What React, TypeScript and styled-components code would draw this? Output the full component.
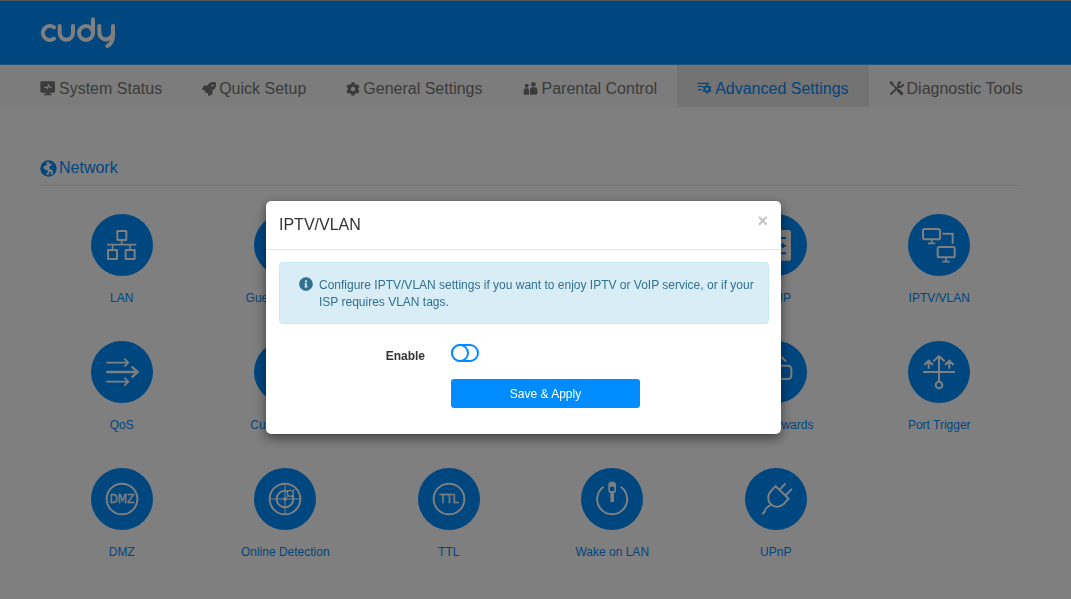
import React, { useState } from "react";
import styled, { createGlobalStyle, css } from "styled-components";
import { FaRocket, FaCog, FaInfoCircle } from "react-icons/fa";

const BLUE = "#008cff";

const GlobalStyle = createGlobalStyle`
  *, *::before, *::after { box-sizing: border-box; }
  html, body { margin: 0; background: #fff; }
  body { font-family: "Liberation Sans", Arial, sans-serif; font-size: 12px; color: #333; }
`;

const Page = styled.div`
  min-height: 100vh;
`;

const Header = styled.header`
  display: flex;
  align-items: center;
  height: 65px;
  padding: 0 40px;
  background: ${BLUE};
  border-top: 1px solid #aaa;
  border-bottom: 1px solid #3ca5fa;
`;

const LogoLink = styled.a`
  display: block;
  height: 32px;
`;

const Nav = styled.nav`
  display: flex;
  height: 43px;
  padding: 0 20px;
  background: #f8f8f8;
  border-bottom: 1px solid #fbfbfb;
`;

const Tab = styled.a<{ $active?: boolean }>`
  display: flex;
  align-items: center;
  gap: 3px;
  padding: 5px 20px 0;
  font-size: 16px;
  white-space: nowrap;
  text-decoration: none;
  color: #777;
  svg { flex: none; }
  ${(p) =>
    p.$active &&
    css`
      color: ${BLUE};
      background: #e7e7e7;
    `}
`;

const Main = styled.main`
  padding: 49px 50px 40px 40px;
`;

const SectionTitle = styled.h2`
  display: flex;
  align-items: center;
  gap: 2px;
  margin: 0 0 28px;
  padding-bottom: 6px;
  border-bottom: 1px solid #eee;
  font-size: 16px;
  line-height: 22px;
  font-weight: 400;
  color: ${BLUE};
`;

const Grid = styled.div`
  display: grid;
  grid-template-columns: repeat(6, 1fr);
  row-gap: 35px;
`;

const Card = styled.a<{ $column: number }>`
  grid-column: ${(p) => p.$column};
  display: flex;
  flex-direction: column;
  align-items: center;
  gap: 14px;
  font-size: 12px;
  line-height: 16px;
  text-decoration: none;
  white-space: nowrap;
  color: ${BLUE};
`;

const Disc = styled.span`
  display: block;
  width: 62px;
  height: 62px;
  border-radius: 50%;
  background: ${BLUE};
  svg { display: block; }
`;

const Overlay = styled.div`
  position: fixed;
  inset: 0;
  display: flex;
  justify-content: center;
  align-items: flex-start;
  padding: 201px 24px 24px 0;
  background: rgba(0, 0, 0, 0.5);
`;

const Dialog = styled.section`
  width: 100%;
  max-width: 515px;
  background: #fff;
  border-radius: 5px;
  box-shadow: 0 4px 12px rgba(0, 0, 0, 0.5), 0 0 1px rgba(0, 0, 0, 0.4);
`;

const DialogHeader = styled.header`
  display: flex;
  justify-content: space-between;
  align-items: flex-start;
  padding: 12px 13px;
  border-bottom: 1px solid #e5e5e5;
`;

const DialogTitle = styled.h4`
  margin: 0;
  font-size: 16px;
  line-height: 24px;
  font-weight: 400;
`;

const Close = styled.button`
  margin: 0;
  padding: 0;
  border: 0;
  background: none;
  font: bold 18px/16px "Liberation Sans", Arial, sans-serif;
  color: #c4c4c4;
  cursor: pointer;
`;

const DialogBody = styled.form`
  display: flex;
  flex-direction: column;
  gap: 16px;
  padding: 12px 12px 26px 13px;
`;

const Alert = styled.div`
  display: flex;
  gap: 6px;
  margin-bottom: 3px;
  padding: 14px 12px 12px 19px;
  border: 1px solid #c5ebf2;
  border-radius: 4px;
  background: #d9edf7;
  color: #31708f;
  line-height: 17px;
  svg { flex: none; }
  p { margin: 0; }
`;

const Row = styled.div`
  display: grid;
  grid-template-columns: 146px 189px;
  column-gap: 26px;
  align-items: center;
`;

const Label = styled.label`
  padding-top: 6px;
  text-align: right;
  font-weight: 700;
  line-height: 14px;
`;

const Switch = styled.input`
  appearance: none;
  position: relative;
  width: 28px;
  height: 18px;
  margin: 0;
  border: 2px solid ${BLUE};
  border-radius: 9px;
  background: #fff;
  cursor: pointer;
  &::before {
    content: "";
    position: absolute;
    top: -2px;
    left: -2px;
    width: 18px;
    height: 18px;
    border: 2px solid ${BLUE};
    border-radius: 50%;
    background: #fff;
  }
  &:checked { background: ${BLUE}; }
  &:checked::before { left: 8px; }
`;

const Submit = styled.button`
  grid-column: 2;
  height: 29px;
  border: 0;
  border-radius: 3px;
  background: ${BLUE};
  color: #fff;
  font: 12px "Liberation Sans", Arial, sans-serif;
  cursor: pointer;
`;

const Logo = () => (
  <svg width="76" height="32" viewBox="120 50 228 96" fill="none" stroke="#fff" strokeWidth="12" strokeLinecap="round" strokeLinejoin="round" aria-label="cudy">
    <path d="M162 81A21 21 0 1 0 162 115" />
    <path d="M179 77V98A20 20 0 0 0 219 98V77" />
    <circle cx="258" cy="98" r="21" />
    <path d="M279 57V98" />
    <path d="M298 77V98A20 20 0 0 0 322 117Q334 112 339 101M339 77V108Q338 128 322 137" />
  </svg>
);

const MonitorIcon = () => (
  <svg width="16" height="16" viewBox="0 0 48 48" fill="currentColor">
    <path fillRule="evenodd" d="M5 1H41Q45 1 45 5V31Q45 35 41 35H30V39H35V43H11V39H17V35H5Q1 35 1 31V5Q1 1 5 1ZM12 18V21H19L22 26L27 15L29 21H35V18H31L26 8L21 18Z" />
  </svg>
);

const PeopleIcon = () => (
  <svg width="16" height="16" viewBox="0 0 48 48" fill="currentColor">
    <circle cx="11" cy="14" r="6" />
    <circle cx="31" cy="10" r="7" />
    <path d="M4 41Q2 41 2 39V29Q2 22 9 22H14Q18 22 18 28V41ZM21 41V26Q21 19 28 19H36Q43 19 43 26V37Q43 41 39 41Z" />
  </svg>
);

const ListCogIcon = () => (
  <svg width="15" height="15" viewBox="0 0 45 45" fill="none" stroke="currentColor">
    <path strokeWidth="4" d="M2 7H36M2 16H16M2 26H13" />
    <circle cx="30" cy="24" r="8" strokeWidth="5" />
    <path strokeWidth="5" d="M30 16V10M30 32V38M23 20L18 17M37 28L42 31M23 28L18 31M37 20L42 17" />
  </svg>
);

const ToolsIcon = () => (
  <svg width="15" height="16" viewBox="0 0 45 48" fill="none" stroke="currentColor">
    <path strokeWidth="5" d="M5 5L24 24" />
    <path strokeWidth="9" strokeLinecap="round" d="M28 28L38 38" />
    <path strokeWidth="6" strokeLinecap="round" d="M6 39L29 16" />
    <path strokeWidth="6" d="M36 3Q27 5 28 13Q30 20 37 17Q42 15 43 9" />
    <path fill="currentColor" stroke="none" d="M1 3L6 0L14 6L12 12L7 13Z" />
  </svg>
);

const GlobeIcon = () => (
  <svg width="17" height="17" viewBox="0 0 48 48">
    <circle cx="24" cy="24" r="21" fill="none" stroke={BLUE} strokeWidth="4" />
    <path fill={BLUE} d="M3 15Q9 4 22 2L17 8L21 11L15 17L12 16L9 22L14 27L21 29L23 34L18 38V45Q5 40 2 27ZM25 3Q38 3 44 14L46 22L43 31L39 38L36 34V28L29 27L26 22L29 16L35 14L31 10L26 11ZM26 33L31 34L29 44L24 45Z" />
  </svg>
);

const glyphs: Record<string, React.ReactNode> = {
  lan: (
    <>
      <rect x="79" y="51" width="27" height="27" rx="1" />
      <rect x="51" y="108" width="27" height="27" rx="1" />
      <rect x="104" y="108" width="27" height="27" rx="1" />
      <path strokeWidth="5" d="M48 92H136M92 80V92M65 92V106M117 92V106" />
    </>
  ),
  guest: (
    <path d="M46 76Q93 36 140 76M62 94Q93 68 124 94M78 112Q93 100 108 112" />
  ),
  server: (
    <>
      <rect x="48" y="48" width="90" height="92" rx="6" fill="#fff" stroke="none" />
      <path stroke={BLUE} d="M80 72H123M80 95H123M80 118H123M114 88V102" />
    </>
  ),
  iptv: (
    <>
      <rect x="45" y="45" width="51" height="31" rx="5" />
      <rect x="89" y="99" width="51" height="31" rx="5" />
      <path strokeWidth="5" d="M71 77V88M60 88H82M114 131V143M103 143H125" />
      <path d="M103 59H134V89" />
    </>
  ),
  qos: (
    <>
      <path strokeWidth="5" d="M46 65H111M100 53L112 65L100 77M46 122H111M100 110L112 122L100 134" />
      <path strokeWidth="7" d="M46 93H139M122 77L140 93L122 109" />
    </>
  ),
  custom: (
    <path d="M48 60H138V126H48ZM60 80H126M60 100H106" />
  ),
  forward: (
    <>
      <rect x="46" y="74" width="93" height="40" rx="10" />
      <path d="M93 140V44M74 62L93 44M110 48L123 62" />
    </>
  ),
  trigger: (
    <>
      <path d="M45 93H141M93 46V121M76 61L93 45L110 61" />
      <path d="M62 83V60M49 72L62 59L75 72M124 83V60M111 72L124 59L137 72" />
      <circle cx="93" cy="132" r="10" />
    </>
  ),
  dmz: (
    <>
      <circle cx="93" cy="93" r="46" />
      <text x="93" y="106" textAnchor="middle" fontFamily="'DejaVu Sans Condensed', 'DejaVu Sans', sans-serif" fontSize="36" fill="#fff" stroke="#fff" strokeWidth="1">DMZ</text>
    </>
  ),
  radar: (
    <>
      <circle cx="93" cy="93" r="46" />
      <circle cx="93" cy="93" r="25" />
      <path strokeWidth="3" d="M93 47V139M47 93H139M93 93L124 62" />
      <circle cx="93" cy="93" r="6" fill="#fff" stroke="none" />
      <circle cx="109" cy="76" r="9" fill={BLUE} strokeWidth="4" />
    </>
  ),
  ttl: (
    <>
      <circle cx="93" cy="93" r="46" />
      <text x="93" y="106" textAnchor="middle" fontFamily="'DejaVu Sans Condensed', 'DejaVu Sans', sans-serif" fontSize="36" fill="#fff" stroke="#fff" strokeWidth="1">TTL</text>
    </>
  ),
  wake: (
    <>
      <path strokeLinecap="round" d="M66 58A45 45 0 1 0 121 58" />
      <path fill="#fff" stroke="none" fillRule="evenodd" d="M86 41H101V46H105V70L101 75H99V102H88V75H86L82 70V46H86ZM87 56V69H100V56Z" />
    </>
  ),
  plug: (
    <path strokeLinecap="round" d="M92 55L131 92L115 109Q100 121 83 113Q66 102 71 81Q73 73 92 55M104 65L120 48M123 81L139 64M77 111Q61 120 60 127T53 137" />
  ),
};

const cards = [
  { label: "LAN", icon: "lan", column: 1 },
  { label: "Guest Network", icon: "guest", column: 2 },
  { label: "IGMP", icon: "server", column: 5 },
  { label: "IPTV/VLAN", icon: "iptv", column: 6 },
  { label: "QoS", icon: "qos", column: 1 },
  { label: "Custom DNS", icon: "custom", column: 2 },
  { label: "Port Forwards", icon: "forward", column: 5 },
  { label: "Port Trigger", icon: "trigger", column: 6 },
  { label: "DMZ", icon: "dmz", column: 1 },
  { label: "Online Detection", icon: "radar", column: 2 },
  { label: "TTL", icon: "ttl", column: 3 },
  { label: "Wake on LAN", icon: "wake", column: 4 },
  { label: "UPnP", icon: "plug", column: 5 },
];

const tabs = [
  { label: "System Status", icon: <MonitorIcon /> },
  { label: "Quick Setup", icon: <FaRocket size={14} /> },
  { label: "General Settings", icon: <FaCog size={14} /> },
  { label: "Parental Control", icon: <PeopleIcon /> },
  { label: "Advanced Settings", icon: <ListCogIcon />, active: true },
  { label: "Diagnostic Tools", icon: <ToolsIcon /> },
];

export default function App() {
  const [enabled, setEnabled] = useState(false);
  return (
    <>
      <GlobalStyle />
      <Page>
        <Header>
          <LogoLink href="#home"><Logo /></LogoLink>
        </Header>
        <Nav>
          {tabs.map((t) => (
            <Tab key={t.label} href="#tab" $active={t.active}>
              {t.icon}
              {t.label}
            </Tab>
          ))}
        </Nav>
        <Main>
          <SectionTitle><GlobeIcon />Network</SectionTitle>
          <Grid>
            {cards.map((c) => (
              <Card key={c.label} href="#card" $column={c.column}>
                <Disc>
                  <svg width="62" height="62" viewBox="0 0 186 186" fill="none" stroke="#fff" strokeWidth="6" aria-hidden="true">
                    {glyphs[c.icon]}
                  </svg>
                </Disc>
                {c.label}
              </Card>
            ))}
          </Grid>
        </Main>
      </Page>
      <Overlay>
        <Dialog role="dialog" aria-labelledby="dialog-title">
          <DialogHeader>
            <DialogTitle id="dialog-title">IPTV/VLAN</DialogTitle>
            <Close type="button" aria-label="Close">×</Close>
          </DialogHeader>
          <DialogBody onSubmit={(e) => e.preventDefault()}>
            <Alert>
              <FaInfoCircle size={14} />
              <p>Configure IPTV/VLAN settings if you want to enjoy IPTV or VoIP service, or if your ISP requires VLAN tags.</p>
            </Alert>
            <Row>
              <Label htmlFor="enable">Enable</Label>
              <Switch id="enable" type="checkbox" checked={enabled} onChange={(e) => setEnabled(e.target.checked)} />
            </Row>
            <Row>
              <Submit type="submit">Save &amp; Apply</Submit>
            </Row>
          </DialogBody>
        </Dialog>
      </Overlay>
    </>
  );
}
